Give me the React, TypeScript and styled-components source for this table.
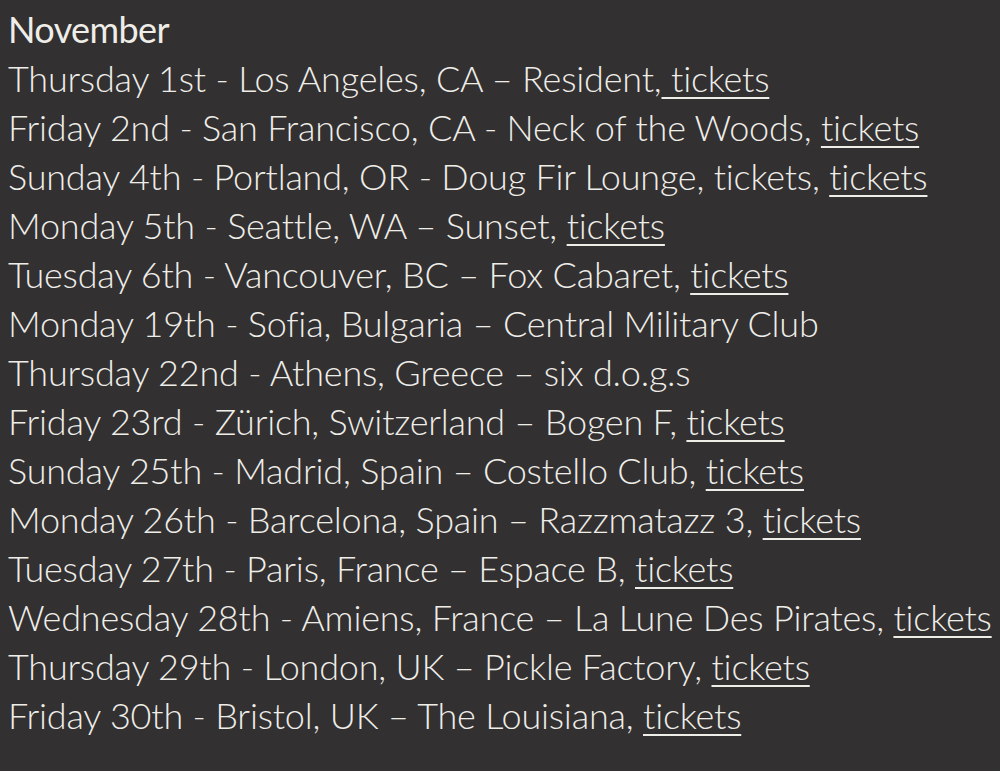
import React from "react";
import styled, { createGlobalStyle } from "styled-components";

type Show = {
  text: string;
  link?: string;
};

const shows: Show[] = [
  { text: "Thursday 1st - Los Angeles, CA \u2013 Resident,", link: " tickets" },
  { text: "Friday 2nd - San Francisco, CA - Neck of the Woods, ", link: "tickets" },
  { text: "Sunday 4th - Portland, OR - Doug Fir Lounge, tickets, ", link: "tickets" },
  { text: "Monday 5th - Seattle, WA \u2013 Sunset, ", link: "tickets" },
  { text: "Tuesday 6th - Vancouver, BC \u2013 Fox Cabaret, ", link: "tickets" },
  { text: "Monday 19th - Sofia, Bulgaria \u2013 Central Military Club" },
  { text: "Thursday 22nd - Athens, Greece \u2013 six d.o.g.s" },
  { text: "Friday 23rd - Z\u00fcrich, Switzerland \u2013 Bogen F, ", link: "tickets" },
  { text: "Sunday 25th - Madrid, Spain \u2013 Costello Club, ", link: "tickets" },
  { text: "Monday 26th - Barcelona, Spain \u2013 Razzmatazz 3, ", link: "tickets" },
  { text: "Tuesday 27th - Paris, France \u2013 Espace B, ", link: "tickets" },
  { text: "Wednesday 28th - Amiens, France \u2013 La Lune Des Pirates, ", link: "tickets" },
  { text: "Thursday 29th - London, UK \u2013 Pickle Factory, ", link: "tickets" },
  { text: "Friday 30th - Bristol, UK \u2013 The Louisiana, ", link: "tickets" },
];

const GlobalStyle = createGlobalStyle`
  html, body {
    margin: 0;
    padding: 0;
    background: #323031;
  }
`;

const Page = styled.div`
  min-height: 100vh;
  background: #323031;
  color: #efede8;
  font-family: Lato, "DejaVu Sans", sans-serif;
  font-weight: 300;
  font-size: 36px;
  letter-spacing: -0.2px;
  line-height: 49px;
  padding: 5px 0 0 8px;
  box-sizing: border-box;
`;

const Month = styled.div`
  font-weight: 400;
  letter-spacing: -0.6px;
`;

const Line = styled.div`
  white-space: nowrap;
`;

const Tickets = styled.a`
  color: inherit;
  text-decoration: underline;
  text-underline-offset: 5px;
  text-decoration-thickness: 2px;
  white-space: pre;
`;

export default function App() {
  return (
    <Page>
      <GlobalStyle />
      <Month>November</Month>
      {shows.map((s, i) => (
        <Line key={i}>
          {s.text}
          {s.link && <Tickets href="#">{s.link}</Tickets>}
        </Line>
      ))}
    </Page>
  );
}
